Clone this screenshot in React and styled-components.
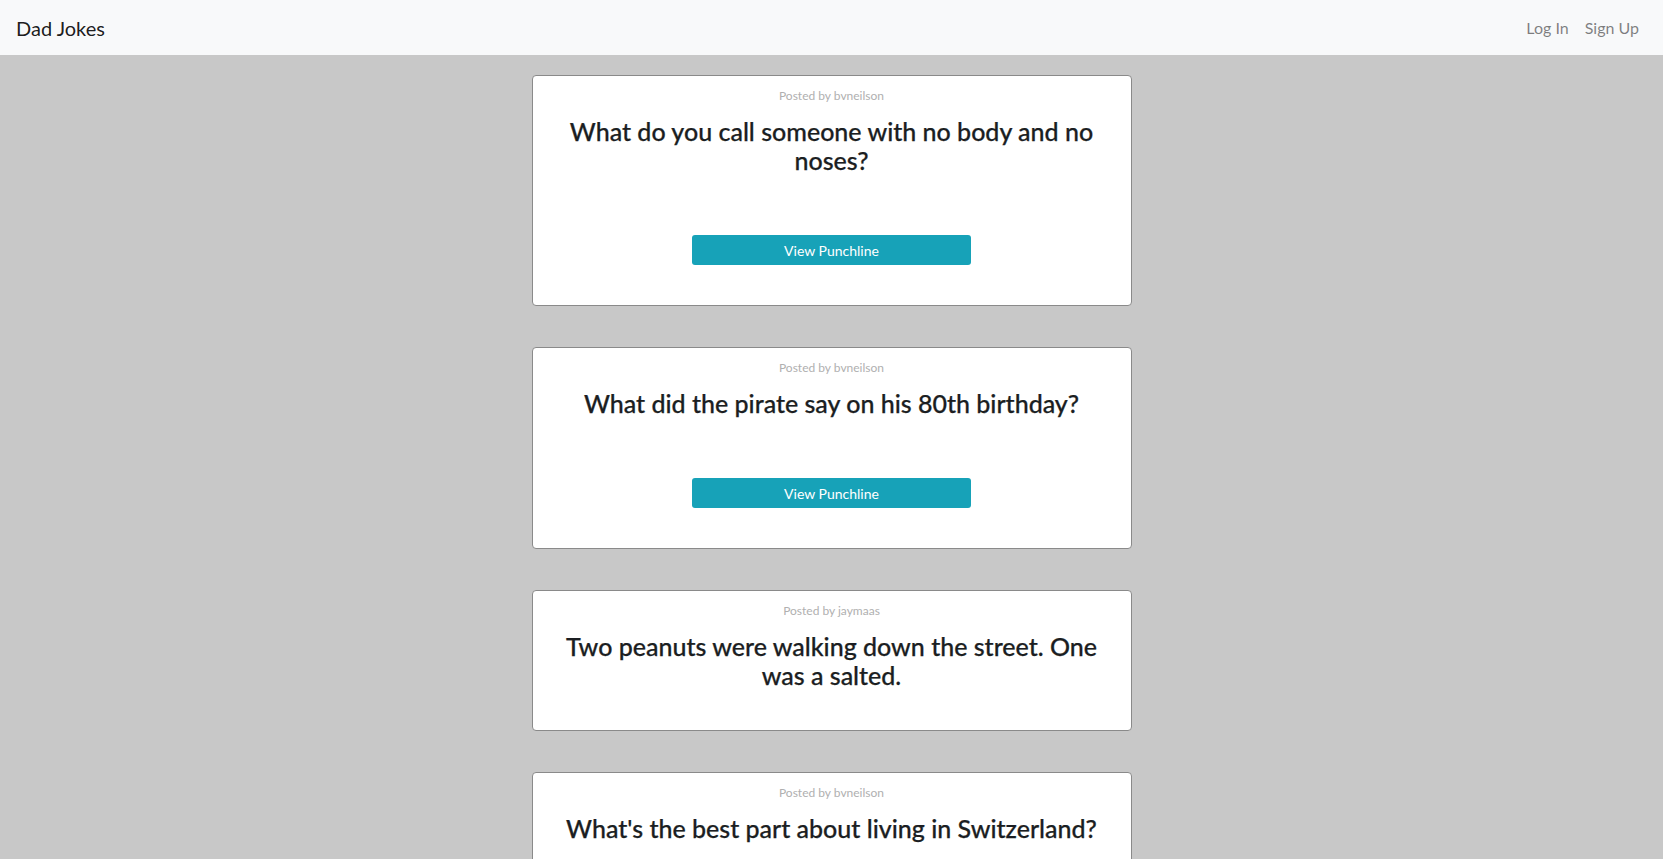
import React from 'react'
import styled, { createGlobalStyle } from "styled-components";

const GlobalStyle = createGlobalStyle`
    body {
        margin: 0;
        background: #c8c8c8;
        font-family: "Segoe UI", Lato, "Liberation Sans", sans-serif;
        color: #212529;
    }
`

const jokes = [
    { id: 1, author: 'bvneilson', setup: 'What do you call someone with no body and no noses?', punchline: true },
    { id: 2, author: 'bvneilson', setup: 'What did the pirate say on his 80th birthday?', punchline: true },
    { id: 3, author: 'jaymaas', setup: 'Two peanuts were walking down the street. One was a salted.', punchline: false },
    { id: 4, author: 'bvneilson', setup: "What's the best part about living in Switzerland?", punchline: true },
]

export default function App() {
    return (
        <Page>
            <GlobalStyle />
            <Navbar>
                <Brand href="#">Dad Jokes</Brand>
                <NavLinks>
                    <NavLink href="#">Log In</NavLink>
                    <NavLink href="#">Sign Up</NavLink>
                </NavLinks>
            </Navbar>
            <Feed>
                {jokes.map(joke => (
                    <JokeCard key={joke.id}>
                        <Posted>Posted by {joke.author}</Posted>
                        <Setup>{joke.setup}</Setup>
                        {joke.punchline && <PunchButton>View Punchline</PunchButton>}
                    </JokeCard>
                ))}
            </Feed>
        </Page>
    )
}

const Page = styled.div`
    min-height: 100vh;
    background: #c8c8c8;
`
const Navbar = styled.nav`
    height: 55px;
    background: #f8f9fa;
    display: flex;
    align-items: center;
    justify-content: space-between;
    padding: 0 16px;
    box-sizing: border-box;
`
const Brand = styled.a`
    font-size: 20px;
    color: rgba(0, 0, 0, 0.9);
    text-decoration: none;
`
const NavLinks = styled.div`
    display: flex;
`
const NavLink = styled.a`
    font-size: 16px;
    padding: 0 8px;
    color: rgba(0, 0, 0, 0.5);
    text-decoration: none;
`
const Feed = styled.main`
    display: flex;
    flex-direction: column;
    align-items: center;
    gap: 41px;
    padding-top: 20px;
`
const JokeCard = styled.div`
    width: 600px;
    box-sizing: border-box;
    background: #fff;
    border: 1px solid #8a8a8a;
    border-radius: 4px;
    padding: 11px 20px 40px;
    display: flex;
    flex-direction: column;
    align-items: center;
    text-align: center;
`
const Posted = styled.div`
    font-size: 12px;
    line-height: 18px;
    color: #b0b0b0;
`
const Setup = styled.h4`
    margin: 12px 0 0;
    font-size: 25px;
    line-height: 29px;
    font-weight: 500;
    color: #1b1e22;
    -webkit-text-stroke: 0.25px #1b1e22;
`
const PunchButton = styled.button`
    margin-top: 60px;
    width: 279px;
    height: 30px;
    border: none;
    border-radius: 3px;
    background: #17a2b8;
    color: #fff;
    font-family: inherit;
    font-size: 14px;
    cursor: pointer;
`
